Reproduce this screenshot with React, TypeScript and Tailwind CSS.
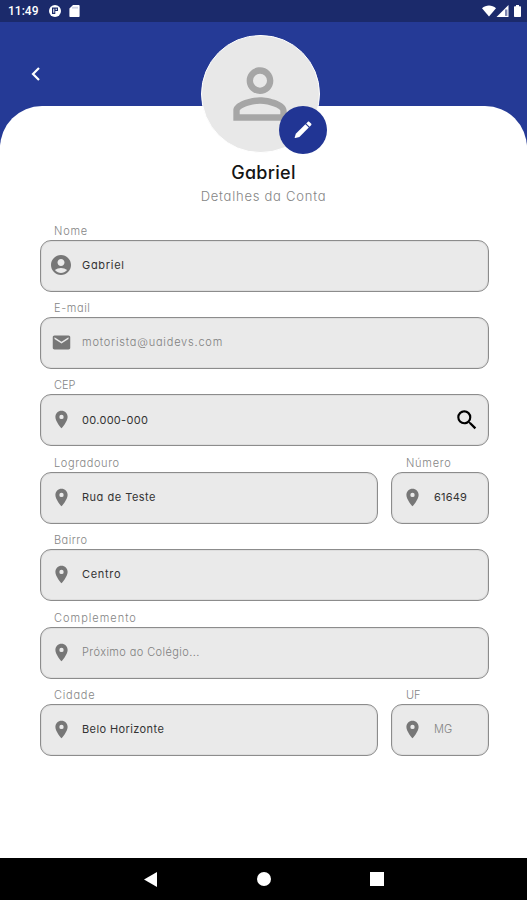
import type { ReactNode } from 'react'
import { MdAccountCircle, MdEmail, MdPersonOutline, MdPlace, MdSearch } from 'react-icons/md'

type FieldProps = {
  label: string
  value: string
  icon?: ReactNode
  action?: ReactNode
  muted?: boolean
  className?: string
  labelClass?: string
  valueClass?: string
}

const StatusBar = () => (
  <div className="flex h-[22px] shrink-0 items-center justify-between bg-[#1b2a6b] pr-[6px] pl-2 text-white">
    <div className="flex items-center">
      <span className="w-[41px] font-[Roboto] text-[12px] leading-[22px] font-medium">11:49</span>
      <svg width="12" height="12" viewBox="0 0 12 12" className="mr-2">
        <circle cx="6" cy="6" r="6" fill="#fff" />
        <path d="M3 2.600h6v3.400H6.300V9H3z" fill="#1b2a6b" />
        <path d="M4.300 3.800h1v4h-1zM6.500 3.800h1.500v1h-1.500z" fill="#fff" />
      </svg>
      <svg width="11" height="12" viewBox="0 0 11 12">
        <path d="M4 0h5.6c.6 0 1 .4 1 1v10c0 .6-.4 1-1 1H1.4c-.6 0-1-.4-1-1V3.6z" fill="#fff" />
        <path d="M4 1.8v1.8M6 1.8v1.8M8 1.8v1.8" stroke="#8b94bd" strokeWidth=".8" />
      </svg>
    </div>
    <div className="flex items-center">
      <svg width="14" height="12" viewBox="0 0 14 12">
        <path d="M7 11.5 0 3.2C4-.4 10-.4 14 3.2z" fill="#fff" />
      </svg>
      <svg width="13" height="12" viewBox="0 0 13 12">
        <path d="M12.5 0v12H.5z" fill="#fff" />
        <path d="M9 4.5h2.4v6.4H9z" fill="#7e86b0" />
      </svg>
      <svg width="7" height="12" viewBox="0 0 7 12" className="ml-[5px]">
        <path d="M2 0h3v1.2h1c.6 0 1 .4 1 1V11c0 .6-.4 1-1 1H1c-.6 0-1-.4-1-1V2.2c0-.6.4-1 1-1h1z" fill="#fff" />
      </svg>
    </div>
  </div>
)

const PencilIcon = () => (
  <svg width="18" height="18" viewBox="0 0 18 18" fill="#fff">
    <path d="M11.400 3.200 14.800 6.600 5.400 16 1.300 17.100C.9 17.200.6 16.900.7 16.500L1.800 12.700z" />
    <path d="M12.200 2.400 13.700.9c.5-.5 1.200-.5 1.700 0L17.100 2.600c.5.500.5 1.200 0 1.700L15.600 5.800z" />
  </svg>
)

const Avatar = () => (
  <div className="relative h-[118px] w-[119px] rounded-full border border-white bg-[#e8e8e8]">
    <MdPersonOutline className="mx-auto mt-[18px] text-[#a6a6a6]" size={80} />
    <button
      type="button"
      aria-label="Editar"
      className="absolute top-[70px] left-[77px] flex size-12 items-center justify-center rounded-full bg-[#213594]"
    >
      <PencilIcon />
    </button>
  </div>
)

const Field = ({
  label,
  value,
  icon = <MdPlace size={21} />,
  action,
  muted = false,
  className = '',
  labelClass = 'tracking-[0.6px]',
  valueClass = 'tracking-[0.4px]',
}: FieldProps) => (
  <div className={className}>
    <p className={`pl-[14px] text-[11px] leading-[18px] font-light whitespace-nowrap text-[#858585] ${labelClass}`}>{label}</p>
    <div className="flex h-[52px] items-center rounded-[11px] border border-[#8c8c8c] bg-[#eaeaea] pr-[8px] pb-px shadow-[inset_0_0_0_1px_#dedede]">
      <span className="flex w-[40px] mr-px shrink-0 justify-center text-[#777]">{icon}</span>
      <span className={`flex-1 text-[11px] whitespace-nowrap ${muted ? 'font-light text-[#808080]' : 'text-[#333]'} ${valueClass}`}>
        {value}
      </span>
      {action}
    </div>
  </div>
)

const NavigationBar = () => (
  <div className="flex h-[42px] shrink-0 items-center bg-black pl-[144px]">
    <svg width="13" height="15" viewBox="0 0 13 15">
      <path d="M13 0v15L0 7.5z" fill="#fff" />
    </svg>
    <div className="ml-[100px] size-[14px] rounded-full bg-white" />
    <div className="ml-[99px] size-[14px] bg-white" />
  </div>
)

const App = () => (
  <div className="flex h-[900px] w-[527px] flex-col overflow-hidden bg-white font-[Inter,sans-serif] [font-feature-settings:'cv11']">
    <StatusBar />
    <header className="h-[84px] shrink-0 bg-[#253a96] pt-[44px] pl-[30px]">
      <button type="button" aria-label="Voltar" className="block">
        <svg width="12" height="16" viewBox="0 0 12 16">
          <path d="M9 2 3 8l6 6" fill="none" stroke="#fff" strokeWidth="2.2" />
        </svg>
      </button>
    </header>
    <div className="flex-1 bg-[linear-gradient(#253a96_36px,#fff_40px)]">
      <main className="flex h-full flex-col rounded-t-[42px] bg-white">
        <div className="-mt-[71px] flex flex-col items-center pr-[7px]">
          <Avatar />
          <h1 className="mt-[7px] ml-[7px] text-[18px] leading-[26px] font-medium tracking-[0.3px] text-[#151515]">Gabriel</h1>
          <p className="ml-[7px] text-[13px] leading-[20px] font-light tracking-[0.75px] text-[#858585]">Detalhes da Conta</p>
        </div>
        <form className="mt-[15.6px] flex flex-col gap-[7.4px] pr-[38px] pl-[40px]">
          <Field
            label="Nome"
            value="Gabriel"
            icon={<MdAccountCircle size={24} />}
            labelClass="tracking-[0.8px]"
            valueClass="tracking-[0.7px]"
          />
          <Field label="E-mail" value="motorista@uaidevs.com" icon={<MdEmail size={21} />} muted valueClass="tracking-[0.8px]" />
          <Field
            label="CEP"
            value="00.000-000"
            action={<MdSearch size={26} className="text-black" />}
            labelClass="tracking-normal"
            valueClass="tracking-[0.3px]"
          />
          <div className="flex gap-[13px]">
            <Field label="Logradouro" value="Rua de Teste" className="w-[338px]" valueClass="tracking-[0.5px]" />
            <Field label="Número" value="61649" className="flex-1" labelClass="pl-[15px] tracking-[0.75px]" valueClass="pl-px tracking-[0.2px]" />
          </div>
          <Field label="Bairro" value="Centro" labelClass="tracking-[0.45px]" valueClass="tracking-[0.7px]" />
          <Field label="Complemento" value="Próximo ao Colégio..." muted labelClass="tracking-[1px]" />
          <div className="flex gap-[13px]">
            <Field label="Cidade" value="Belo Horizonte" className="w-[338px]" labelClass="tracking-[0.75px]" />
            <Field label="UF" value="MG" muted className="flex-1" labelClass="pl-[15px] tracking-normal" valueClass="pl-px" />
          </div>
        </form>
      </main>
    </div>
    <NavigationBar />
  </div>
)

export default App
